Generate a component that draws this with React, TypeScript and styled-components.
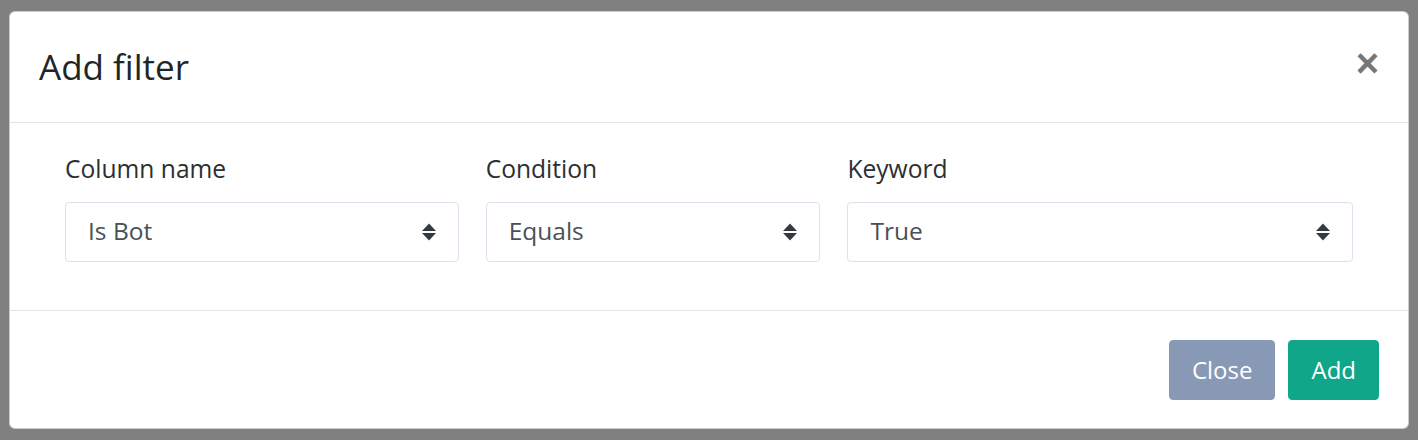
import styled, { createGlobalStyle } from "styled-components";

const GlobalStyle = createGlobalStyle`
  html, body {
    margin: 0;
    padding: 0;
    background: #808080;
    font-family: "Open Sans", "Noto Sans", sans-serif;
  }
  * { box-sizing: border-box; }
`;

const columns = [
  { label: "Column name", value: "Is Bot" },
  { label: "Condition", value: "Equals" },
  { label: "Keyword", value: "True" },
];

const SortIcon = () => (
  <svg width="14" height="18" viewBox="0 0 14 18">
    <path d="M0 8 L7 0.5 L14 8 Z" fill="#343a40" />
    <path d="M0 10 L14 10 L7 17.5 Z" fill="#343a40" />
  </svg>
);

export default function App() {
  return (
    <>
      <GlobalStyle />
      <Backdrop>
        <Modal>
          <Header>
            <Title>Add filter</Title>
            <CloseX>×</CloseX>
          </Header>
          <Body>
            <FieldRow>
              {columns.map((c) => (
                <Field key={c.label}>
                  <Label>{c.label}</Label>
                  <Select>
                    <span>{c.value}</span>
                    <SortIcon />
                  </Select>
                </Field>
              ))}
            </FieldRow>
          </Body>
          <Footer>
            <Button $variant="secondary">Close</Button>
            <Button $variant="primary">Add</Button>
          </Footer>
        </Modal>
      </Backdrop>
    </>
  );
}

const Backdrop = styled.div`
  width: 1418px;
  height: 440px;
  padding: 11px 9px;
`;

const Modal = styled.div`
  width: 1400px;
  height: 418px;
  background: #fff;
  border: 1px solid rgba(0, 0, 0, 0.2);
  border-radius: 6px;
  display: flex;
  flex-direction: column;
`;

const Header = styled.div`
  height: 111px;
  border-bottom: 1px solid #e4e4e4;
  padding: 0 28px 0 29px;
  display: flex;
  align-items: center;
  justify-content: space-between;
`;

const Title = styled.h5`
  margin: 0;
  font-size: 35px;
  font-weight: 400;
  color: #212529;
  line-height: 1.2;
`;

const CloseX = styled.span`
  font-family: "Liberation Sans", Arial, sans-serif;
  font-size: 40px;
  font-weight: 700;
  color: #777;
  line-height: 1;
  margin-top: -8px;
  margin-right: 1px;
  cursor: pointer;
`;

const Body = styled.div`
  height: 187px;
  padding: 28px 55px 0 55px;
`;

const FieldRow = styled.div`
  display: grid;
  grid-template-columns: 394fr 335fr 506fr;
  column-gap: 27px;
`;

const Field = styled.div`
  display: flex;
  flex-direction: column;
`;

const Label = styled.label`
  font-size: 24.6px;
  line-height: 36px;
  color: #2b2f33;
  margin-bottom: 15px;
`;

const Select = styled.div`
  height: 60px;
  border: 1px solid #dde1ec;
  border-radius: 4px;
  padding: 0 22px 3px 22px;
  display: flex;
  align-items: center;
  justify-content: space-between;
  font-size: 24.5px;
  color: #495057;

  svg {
    margin-top: 3px;
  }
`;

const Footer = styled.div`
  flex: 1;
  border-top: 1px solid #e4e4e4;
  padding: 0 29px 0 28px;
  display: flex;
  align-items: center;
  justify-content: flex-end;
  gap: 13px;
`;

const Button = styled.button<{ $variant: "primary" | "secondary" }>`
  height: 60px;
  padding: 0 22px;
  border: 1px solid ${(p) => (p.$variant === "primary" ? "#0fa68a" : "#8799b5")};
  background: ${(p) => (p.$variant === "primary" ? "#0fa68a" : "#8799b5")};
  color: #fff;
  border-radius: 4px;
  font-family: "Open Sans", "Noto Sans", sans-serif;
  font-size: 24px;
  line-height: 1.5;
  cursor: pointer;
`;
